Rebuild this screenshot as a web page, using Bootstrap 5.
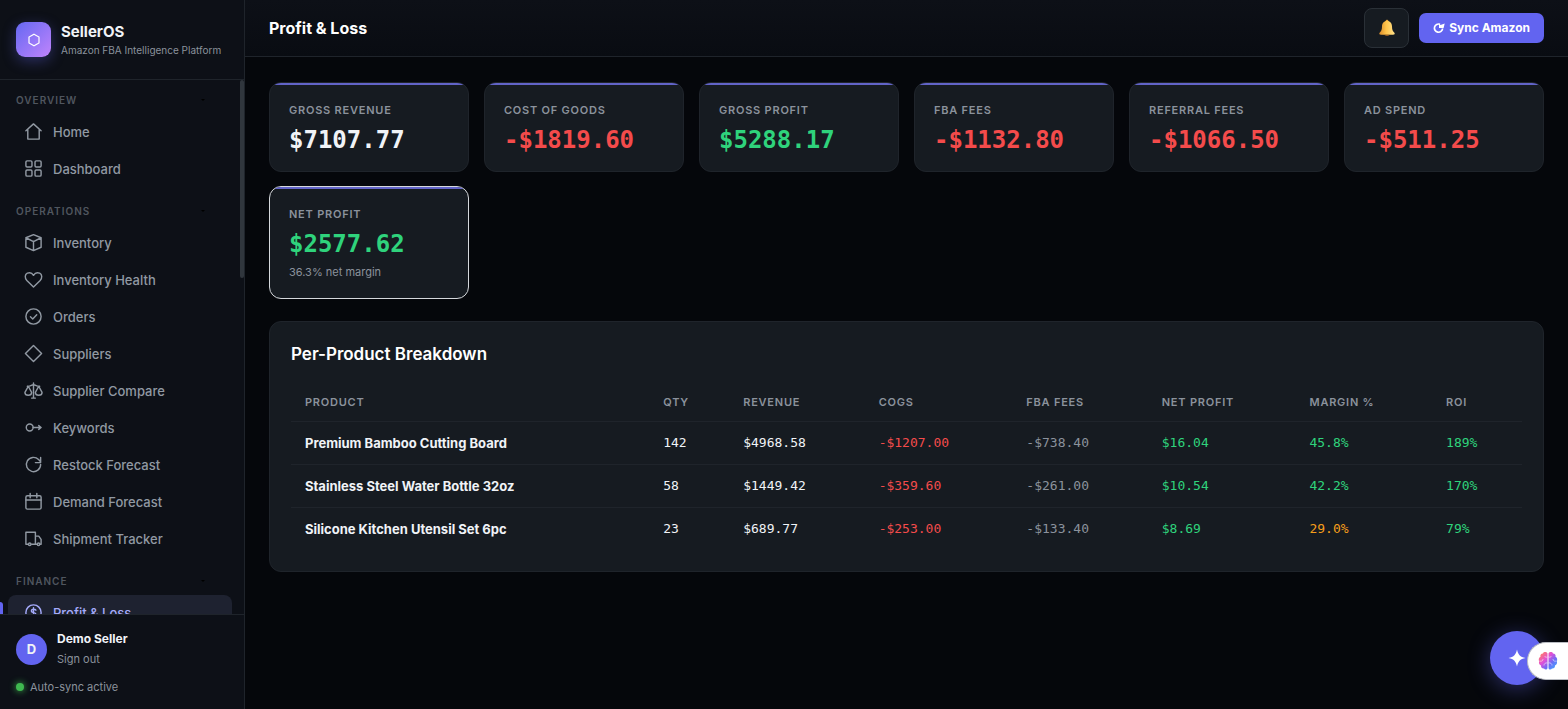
<!DOCTYPE html>
<html lang="en" data-bs-theme="dark">
<head>
<meta charset="utf-8">
<meta name="viewport" content="width=device-width, initial-scale=1">
<title>SellerOS – Profit &amp; Loss</title>
<link href="https://cdn.jsdelivr.net/npm/bootstrap@5.3.0/dist/css/bootstrap.min.css" rel="stylesheet">
<style>
:root{--bg:#05070b;--side:#0d1017;--panel:#161b21;--line:#1f242b;--muted:#8b929c;--ink:#f0f3f7;--brand:#6264f0;--red:#f44b4b;--green:#2fd37c;--amber:#f59e1b}
body{background:var(--bg);color:var(--ink);font-family:Inter,"Liberation Sans",sans-serif;font-size:13px;line-height:20px}
a{text-decoration:none;color:inherit}
.mono{font-family:"DejaVu Sans Mono","Liberation Mono",monospace}
.neg{color:var(--red)!important}.pos{color:var(--green)!important}.warn{color:var(--amber)!important}.dim{color:var(--muted)!important}
.sidebar{width:245px;background:var(--side);border-right:1px solid var(--line)}
.brand{height:80px;border-bottom:1px solid var(--line);padding:0 16px;gap:10px}
.logo{width:35px;height:35px;border-radius:9px;background:linear-gradient(135deg,#6568f2,#c084fc);box-shadow:0 4px 14px rgba(99,102,241,.35)}
.brand-name{font-size:15px;font-weight:700}
.brand-sub{font-size:10px;line-height:16px;color:var(--muted);white-space:nowrap}
.side-nav{min-height:0}
.menu-area{padding:10px 12px 0 8px}
.sect{padding:0 26px 0 8px;height:20px;font-size:10px;font-weight:600;letter-spacing:1px;color:#50565f;background:none;border:0;margin-bottom:4px}
.links{display:flex;flex-direction:column;gap:2px;margin-bottom:15px}
.links a{height:35px;padding:0 16px;gap:10px;border-radius:8px;color:#9199a3;font-weight:500}
.links svg{width:19px;height:19px;fill:none;stroke:currentColor;stroke-width:1.5;stroke-linecap:round;stroke-linejoin:round}
.links a.active{background:#1e2230;color:#a5abfb}
.links a.active::before{content:"";position:absolute;left:-8px;top:7px;width:3px;height:21px;background:var(--brand);border-radius:0 3px 3px 0}
.thumb{position:absolute;right:0;top:0;width:4px;height:37%;background:#30363d;border-radius:2px}
.account{border-top:1px solid var(--line);padding:14px 16px 12px}
.who{gap:10px}
.who-name{font-size:12px;font-weight:700}
.avatar{width:31px;height:31px;background:var(--brand);font-weight:700}
.sync-state{gap:6px}
.status-dot{width:8px;height:8px;border-radius:50%;background:#3fb950;box-shadow:0 0 7px #3fb950}
.fine{font-size:11px;line-height:20px;color:var(--muted)}
.topbar{height:57px;background:linear-gradient(#0d1017,#090c12);border-bottom:1px solid var(--line);padding:0 24px}
.tools{gap:10px}
.page-title{font-size:16px;line-height:24px;font-weight:700;margin:0}
.panel-title{font-size:17px;line-height:24px;font-weight:600;margin:0}
.bell{width:45px;height:40px;background:var(--panel);border:1px solid #2a3037;border-radius:8px;padding:0}
.sync{height:30px;padding:0 14px;border:0;border-radius:7px;background:var(--brand);font-size:12px;font-weight:700;color:#fff;gap:4px}
.content-area{padding:25px 24px}
.metrics{display:grid;grid-template-columns:repeat(auto-fill,minmax(190px,1fr));gap:14px 15px;margin-bottom:22px}
.metric{position:relative;overflow:hidden;background:var(--panel);border:1px solid var(--line);border-radius:12px;padding:17px 19px 11px}
.metric::before{content:"";position:absolute;left:0;right:0;top:0;height:2px;background:#6264c8}
.metric.total{border-color:#d5d8dc;min-height:113px}
.metric h2{font-size:11px;line-height:20px;font-weight:600;letter-spacing:.07em;color:var(--muted);margin:0}
.metric .fine{line-height:16px}
.amount{font-size:24px;line-height:40px;font-weight:700}
.breakdown{background:var(--panel);border:1px solid var(--line);border-radius:12px;padding:20px 21px}
.ledger{table-layout:fixed;margin:17px 0 0;--bs-table-bg:transparent;--bs-table-color:var(--ink);border-color:var(--line);font-size:13px}
.ledger>:not(caption)>*>*{padding:11px 14px;height:43px;vertical-align:middle;border-bottom-width:1px;white-space:nowrap}
.ledger thead th{height:38px;padding:9px 14px;font-size:11px;font-weight:600;letter-spacing:.07em;color:var(--muted)}
.ledger tbody tr:last-child>*{border-bottom:0}
.ledger tbody th{font-weight:700}
.fab{position:fixed;right:24px;bottom:24px;width:54px;height:54px;border-radius:50%;border:0;background:var(--brand);box-shadow:0 4px 22px rgba(99,102,241,.4)}
.edge-tab{position:fixed;right:0;bottom:29px;width:41px;height:38px;border:1px solid #b9bcc2;border-right:0;border-radius:19px 0 0 19px;background:#fff;padding:0}
</style>
</head>
<body>
<div class="d-flex vh-100 overflow-hidden">
<aside class="sidebar d-flex flex-column flex-shrink-0">
  <div class="brand d-flex align-items-center flex-shrink-0">
    <div class="logo d-flex align-items-center justify-content-center flex-shrink-0"><svg width="14" height="14" viewBox="0 0 14 14" fill="none" stroke="#fff" stroke-width="1.2"><path d="M7 1.2 12 4v6l-5 2.8L2 10V4z"/></svg></div>
    <div><div class="brand-name">SellerOS</div><div class="brand-sub">Amazon FBA Intelligence Platform</div></div>
  </div>
  <div class="side-nav position-relative flex-grow-1 overflow-hidden">
    <nav class="menu-area" aria-label="Main">
      <button class="sect w-100 d-flex align-items-center justify-content-between" type="button">OVERVIEW<svg width="6" height="4" viewBox="0 0 6 4"><path d="M1 1h4L3 3z" fill="#000"/></svg></button>
      <div class="links">
        <a href="#" class="d-flex align-items-center"><svg viewBox="0 0 20 20"><path d="M2 9.2 10 2l8 7.2M4 7.6V18h12V7.6"/></svg>Home</a>
        <a href="#" class="d-flex align-items-center"><svg viewBox="0 0 20 20"><rect x="2" y="2" width="6.4" height="6.4" rx="1.2"/><rect x="11.6" y="2" width="6.4" height="6.4" rx="1.2"/><rect x="2" y="11.6" width="6.4" height="6.4" rx="1.2"/><rect x="11.6" y="11.6" width="6.4" height="6.4" rx="1.2"/></svg>Dashboard</a>
      </div>
      <button class="sect w-100 d-flex align-items-center justify-content-between" type="button">OPERATIONS<svg width="6" height="4" viewBox="0 0 6 4"><path d="M1 1h4L3 3z" fill="#000"/></svg></button>
      <div class="links">
        <a href="#" class="d-flex align-items-center"><svg viewBox="0 0 20 20"><path d="m10 1.7 8 3.3v10l-8 3.5L2 15V5zM2 5l8 4 8-4M10 9v9.5"/></svg>Inventory</a>
        <a href="#" class="d-flex align-items-center"><svg viewBox="0 0 20 20"><path d="M10 18 3 11C.6 8.400.8 4.700 3.500 3.400 6 2.200 8.600 3.300 10 5.600c1.400-2.300 4-3.400 6.500-2.200 2.700 1.300 2.900 5 .5 7.600z"/></svg>Inventory Health</a>
        <a href="#" class="d-flex align-items-center"><svg viewBox="0 0 20 20"><circle cx="10" cy="10" r="8"/><path d="m6.800 10.300 2.400 2.400 4.200-4.600"/></svg>Orders</a>
        <a href="#" class="d-flex align-items-center"><svg viewBox="0 0 20 20"><path d="m10 1.500 8.500 8.500-8.500 8.500L1.500 10z"/></svg>Suppliers</a>
        <a href="#" class="d-flex align-items-center"><svg viewBox="0 0 20 20"><path d="M10 2v16M3.500 5.500C6 6.500 7.500 4 10 4s4 2.500 6.500 1.500M4.500 5.500 1 12c0 4 7 4 7 0zM15.500 5.500 12 12c0 4 7 4 7 0zM8 18h4"/></svg>Supplier Compare</a>
        <a href="#" class="d-flex align-items-center"><svg viewBox="0 0 20 20"><circle cx="6" cy="10" r="3.600"/><path d="M9.600 10H18m-2.500-2L18 10l-2.500 2"/></svg>Keywords</a>
        <a href="#" class="d-flex align-items-center"><svg viewBox="0 0 20 20"><path d="M17.500 10a7.500 7.500 0 1 1-2.200-5.300L17.500 7M17.500 2.500V8H12"/></svg>Restock Forecast</a>
        <a href="#" class="d-flex align-items-center"><svg viewBox="0 0 20 20"><rect x="2" y="4" width="16" height="14" rx="1.500"/><path d="M2 8.500h16M6.500 1.500V6M13.500 1.500V6"/></svg>Demand Forecast</a>
        <a href="#" class="d-flex align-items-center"><svg viewBox="0 0 20 20"><path d="M4 16H2V3.500h10V16H8M12 7.500h3.500L18 11v5h-1M12 16h1.500"/><circle cx="6" cy="16" r="1.300"/><circle cx="15.300" cy="16" r="1.300"/></svg>Shipment Tracker</a>
      </div>
      <button class="sect w-100 d-flex align-items-center justify-content-between" type="button">FINANCE<svg width="6" height="4" viewBox="0 0 6 4"><path d="M1 1h4L3 3z" fill="#000"/></svg></button>
      <div class="links">
        <a href="#" class="active position-relative d-flex align-items-center" aria-current="page"><svg viewBox="0 0 20 20"><circle cx="10" cy="10" r="8"/><path d="M12.500 7.500C11.500 6 7.700 6.200 7.700 8.300c0 2.400 4.800 1.200 4.800 3.600 0 2-3.800 2.200-5 .4M10 5v10"/></svg>Profit &amp; Loss</a>
      </div>
    </nav>
    <div class="thumb"></div>
  </div>
  <div class="account flex-shrink-0">
    <div class="who d-flex align-items-center mb-2">
      <div class="avatar rounded-circle d-flex align-items-center justify-content-center">D</div>
      <div><div class="who-name">Demo Seller</div><a href="#" class="fine d-block">Sign out</a></div>
    </div>
    <div class="fine sync-state d-flex align-items-center"><span class="status-dot"></span>Auto-sync active</div>
  </div>
</aside>
<div class="flex-grow-1 d-flex flex-column overflow-auto">
  <header class="topbar d-flex align-items-center justify-content-between flex-shrink-0">
    <h1 class="page-title">Profit &amp; Loss</h1>
    <div class="tools d-flex align-items-center">
      <button class="btn bell d-flex align-items-center justify-content-center" type="button" aria-label="Notifications"><svg width="18" height="18" viewBox="0 0 18 18"><defs><linearGradient id="bellGold"><stop stop-color="#d98a2b"/><stop offset=".45" stop-color="#ffc44a"/><stop offset="1" stop-color="#ffe08a"/></linearGradient></defs><circle cx="9" cy="2.200" r="1.400" fill="#e6a23a"/><path d="M9 2C5.500 2 4 4.500 4 7.500c0 3-.7 4.700-2.400 6.300C.8 15 1.500 15.700 3 15.700h12c1.500 0 2.200-.7 1.400-1.900C14.700 12.200 14 10.500 14 7.500 14 4.500 12.500 2 9 2z" fill="url(#bellGold)"/><path d="M6.500 15.700h5c-.5 1.500-4.500 1.500-5 0z" fill="#b96b20"/></svg></button>
      <button class="btn sync d-flex align-items-center" type="button"><svg width="12" height="12" viewBox="0 0 12 12"><path d="M9.600 6.500A4.100 4.100 0 1 1 7 2.300" fill="none" stroke="#fff" stroke-width="1.700"/><path d="M6 5.900V1.600l1.600 1.500L11.700 1.500 10.600 5.900z" fill="#fff"/></svg>Sync Amazon</button>
    </div>
  </header>
  <main class="content-area">
    <section class="metrics" aria-label="Summary">
      <div class="metric"><h2>GROSS REVENUE</h2><div class="amount mono">$7107.77</div></div>
      <div class="metric"><h2>COST OF GOODS</h2><div class="amount mono neg">-$1819.60</div></div>
      <div class="metric"><h2>GROSS PROFIT</h2><div class="amount mono pos">$5288.17</div></div>
      <div class="metric"><h2>FBA FEES</h2><div class="amount mono neg">-$1132.80</div></div>
      <div class="metric"><h2>REFERRAL FEES</h2><div class="amount mono neg">-$1066.50</div></div>
      <div class="metric"><h2>AD SPEND</h2><div class="amount mono neg">-$511.25</div></div>
      <div class="metric total"><h2>NET PROFIT</h2><div class="amount mono pos">$2577.62</div><div class="fine">36.3% net margin</div></div>
    </section>
    <section class="breakdown">
      <h2 class="panel-title">Per-Product Breakdown</h2>
      <table class="table ledger">
        <colgroup><col style="width:29.1%"><col style="width:6.5%"><col style="width:11%"><col style="width:12%"><col style="width:11%"><col style="width:12%"><col style="width:11.1%"><col style="width:7.3%"></colgroup>
        <thead><tr><th scope="col">PRODUCT</th><th scope="col">QTY</th><th scope="col">REVENUE</th><th scope="col">COGS</th><th scope="col">FBA FEES</th><th scope="col">NET PROFIT</th><th scope="col">MARGIN %</th><th scope="col">ROI</th></tr></thead>
        <tbody>
          <tr><th scope="row">Premium Bamboo Cutting Board</th><td class="mono">142</td><td class="mono">$4968.58</td><td class="mono neg">-$1207.00</td><td class="mono dim">-$738.40</td><td class="mono pos">$16.04</td><td class="mono pos">45.8%</td><td class="mono pos">189%</td></tr>
          <tr><th scope="row">Stainless Steel Water Bottle 32oz</th><td class="mono">58</td><td class="mono">$1449.42</td><td class="mono neg">-$359.60</td><td class="mono dim">-$261.00</td><td class="mono pos">$10.54</td><td class="mono pos">42.2%</td><td class="mono pos">170%</td></tr>
          <tr><th scope="row">Silicone Kitchen Utensil Set 6pc</th><td class="mono">23</td><td class="mono">$689.77</td><td class="mono neg">-$253.00</td><td class="mono dim">-$133.40</td><td class="mono pos">$8.69</td><td class="mono warn">29.0%</td><td class="mono pos">79%</td></tr>
        </tbody>
      </table>
    </section>
  </main>
</div>
</div>
<button class="fab d-flex align-items-center justify-content-center" type="button" aria-label="Assistant"><svg width="18" height="18" viewBox="0 0 18 18"><path d="M9 .5c1 5 3 7.400 8.500 8.500C12 10.100 10 12.500 9 17.500 8 12.500 6 10.100.5 9 6 7.900 8 5.500 9 .5z" fill="#fff"/></svg></button>
<button class="edge-tab d-flex align-items-center justify-content-center" type="button" aria-label="Open extension"><svg width="20" height="20" viewBox="0 0 20 20"><defs><linearGradient id="brainHue" x1="0" y1="0" x2="1" y2="1"><stop offset=".1" stop-color="#ff7a6b"/><stop offset=".4" stop-color="#e04fd8"/><stop offset=".65" stop-color="#6d6bf5"/><stop offset="1" stop-color="#39b8ff"/></linearGradient></defs><path fill="url(#brainHue)" d="M9.500 2.500C8.500.5 5.500.8 5 2.500 3 2.500 2 4 2.500 5.700.8 6.500.3 9 1.200 10.300.5 12 1.200 14 3 14.500c-.2 2 1.300 3.300 3 3 .8 1.500 3 1.500 3.500-.2zM10.500 2.500c1-2 4-1.700 4.500 0 2 0 3 1.500 2.500 3.200 1.700.8 2.200 3.300 1.300 4.600.7 1.700 0 3.700-1.800 4.200.2 2-1.300 3.300-3 3-.8 1.500-3 1.500-3.500-.2z"/><path d="M9.500 6C8 6.500 7 6 6.500 5M1.500 10C4 10.800 5 9.500 5 8M9.500 12c-2-.5-3.500.5-3.500 2.500M10.500 6c1.500.5 2.500 0 3-1M18.500 10c-2.500.8-3.500-.5-3.500-2M10.500 12c2-.5 3.500.5 3.500 2.500" fill="none" stroke="#fff" stroke-width=".5"/></svg></button>
<script src="https://cdn.jsdelivr.net/npm/bootstrap@5.3.0/dist/js/bootstrap.bundle.min.js"></script>
</body>
</html>
